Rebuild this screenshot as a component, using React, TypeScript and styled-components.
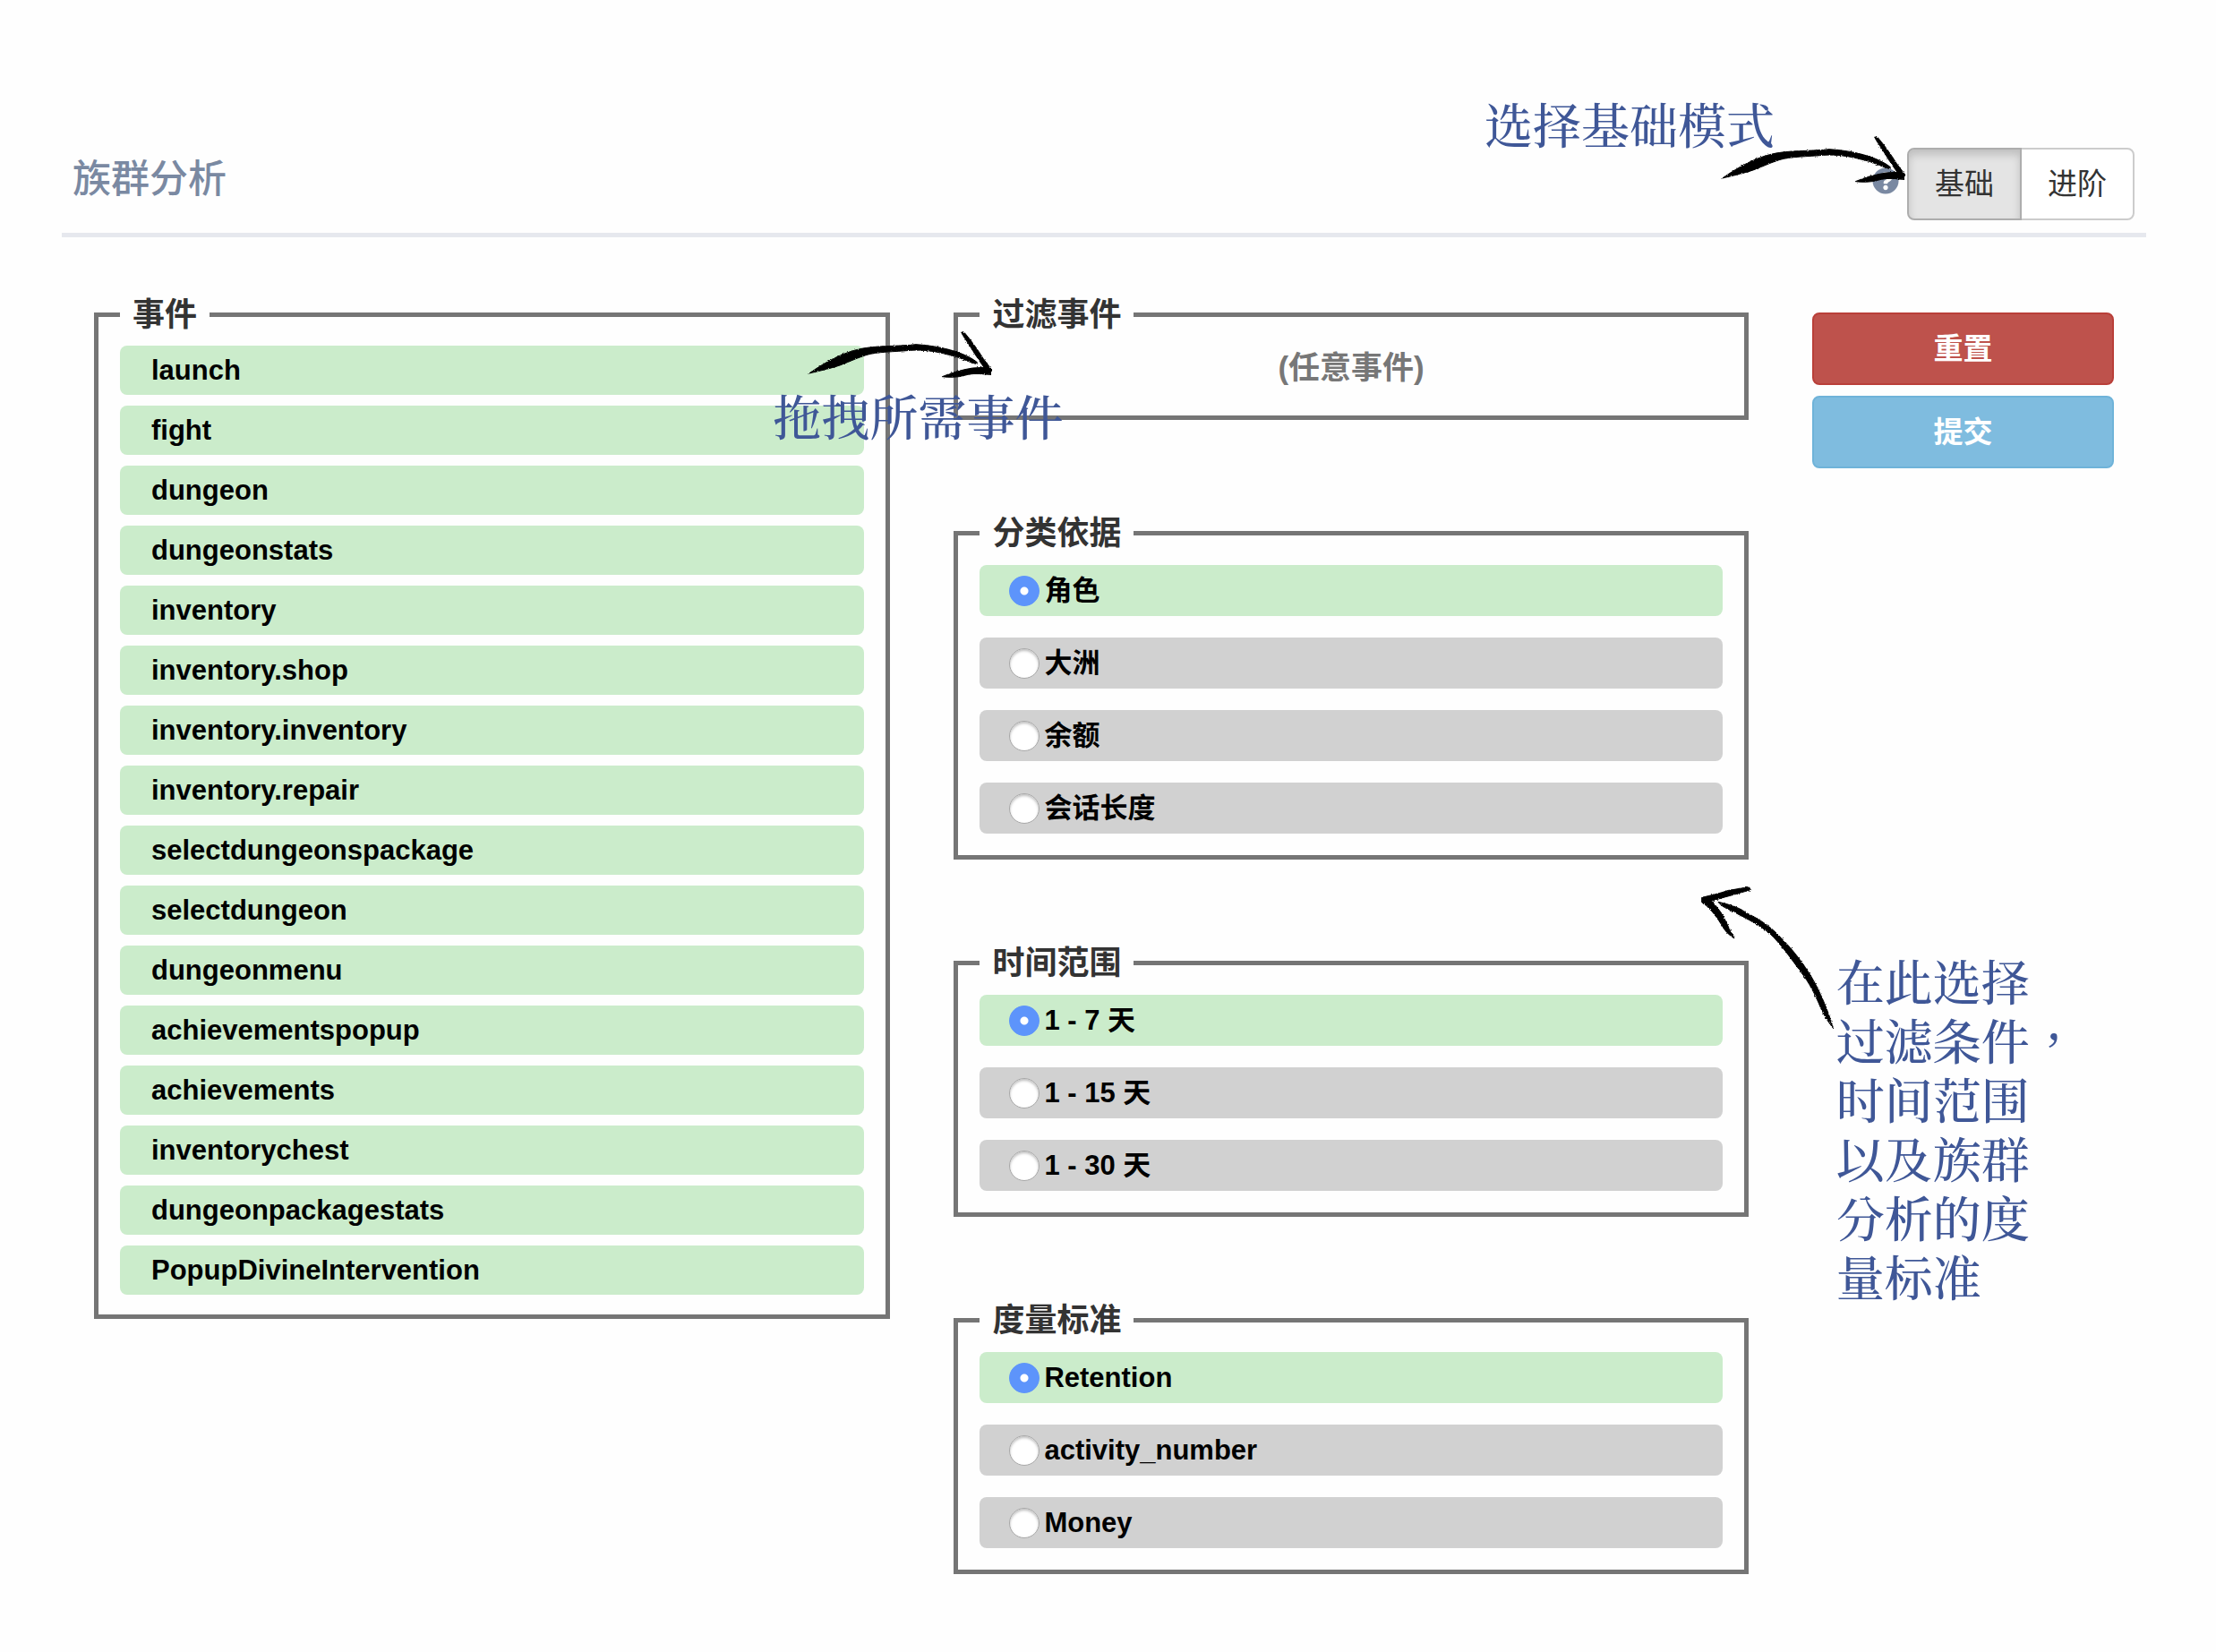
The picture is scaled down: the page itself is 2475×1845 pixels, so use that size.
import React, { useState } from "react";
import styled, { createGlobalStyle } from "styled-components";
import { FaQuestionCircle } from "react-icons/fa";

const GlobalStyle = createGlobalStyle`
  *, *::before, *::after { box-sizing: border-box; }
  body {
    margin: 0;
    background: #fefefe;
    color: #333;
    font-family: "Liberation Sans", "Noto Sans CJK SC", sans-serif;
  }
  button, input { font-family: inherit; }
`;

const Page = styled.div`
  padding: 0 78px 48px 69px;
`;

const Header = styled.header`
  position: relative;
  display: flex;
  align-items: flex-end;
  justify-content: space-between;
  padding: 165px 13px 14px 12px;
  border-bottom: 5px solid #e6e8ee;
`;

const Title = styled.h1`
  margin: 0;
  padding-bottom: 14px;
  font-size: 43px;
  line-height: 64px;
  font-weight: 500;
  color: #7a89a2;
`;

const Tools = styled.div`
  display: flex;
  align-items: center;
  gap: 9px;
`;

const HelpButton = styled.button`
  display: flex;
  margin: 0 0 8px;
  padding: 0;
  border: 0;
  background: none;
  font-size: 30px;
  color: #7a89a2;
`;

const Segmented = styled.div`
  display: flex;
`;

const Segment = styled.button<{ $active: boolean }>`
  position: relative;
  z-index: ${(p) => (p.$active ? 1 : 0)};
  height: 81px;
  padding: 0 29px;
  border: 2px solid ${(p) => (p.$active ? "#adadad" : "#ccc")};
  background: ${(p) => (p.$active ? "#e4e4e4" : "#fff")};
  box-shadow: ${(p) => (p.$active ? "inset 0 6px 10px rgba(0, 0, 0, 0.16)" : "none")};
  font-size: 33px;
  line-height: 48px;
  color: #333;
  &:first-child { border-radius: 8px 0 0 8px; }
  &:last-child { margin-left: -2px; border-radius: 0 8px 8px 0; }
`;

const Board = styled.main`
  display: grid;
  grid-template-columns: minmax(0, 889fr) minmax(0, 887fr) minmax(0, 337fr);
  align-items: start;
  gap: 71px;
  padding: 61px 36px 0;
`;

const Column = styled.div`
  position: relative;
  display: flex;
  flex-direction: column;
  gap: 90px;
`;

const Group = styled.fieldset<{ $spaced?: boolean; $dense?: boolean }>`
  min-width: 0;
  margin: 0 0 ${(p) => (p.$spaced ? 11 : 0)}px;
  padding: ${(p) => (p.$dense ? "9px 24px 22px" : "10px 24px 24px")};
  border: 5px solid #757575;
`;

const Legend = styled.legend`
  padding: 0 14px;
  font-size: 36px;
  line-height: 51px;
  font-weight: 700;
`;

const EventList = styled.ul`
  display: grid;
  gap: 12px;
  margin: 0;
  padding: 0;
  list-style: none;
`;

const EventItem = styled.li`
  height: 55px;
  padding: 0 35px;
  border-radius: 8px;
  background: #cbeccb;
  font-size: 31px;
  line-height: 55px;
  font-weight: 700;
  color: #000;
  cursor: grab;
`;

const DropHint = styled.p`
  margin: 0;
  padding-bottom: 5px;
  font-size: 35px;
  line-height: 48px;
  font-weight: 700;
  text-align: center;
  color: #777;
`;

const Options = styled.div`
  display: grid;
  gap: 24px;
`;

const Option = styled.label<{ $checked: boolean }>`
  display: flex;
  align-items: center;
  gap: 5px;
  height: 57px;
  padding: 0 33px;
  border-radius: 8px;
  background: ${(p) => (p.$checked ? "#cbeccb" : "#d1d1d1")};
  font-size: 31px;
  line-height: 48px;
  font-weight: 700;
  color: #000;
`;

const Radio = styled.input`
  appearance: none;
  flex: none;
  width: 34px;
  height: 34px;
  margin: 0;
  border: 1px solid #a8a8a8;
  border-radius: 50%;
  background: #fff;
  box-shadow: inset 0 2px 3px rgba(0, 0, 0, 0.25);
  &:checked {
    border-color: #5d94fb;
    background: radial-gradient(circle, #fff 4px, #5d94fb 5px);
    box-shadow: none;
  }
`;

const Actions = styled.div`
  position: relative;
  display: grid;
  gap: 12px;
  padding-top: 23px;
`;

const ActionButton = styled.button<{ $tone: "danger" | "info" }>`
  height: 81px;
  padding: 0 24px;
  border: 2px solid ${(p) => (p.$tone === "danger" ? "#b93f39" : "#6fb3d9")};
  border-radius: 8px;
  background: ${(p) => (p.$tone === "danger" ? "#be524c" : "#7fbcdf")};
  font-size: 33px;
  line-height: 48px;
  font-weight: 700;
  color: #fff;
`;

const Note = styled.p`
  position: absolute;
  z-index: 3;
  margin: 0;
  font-family: "Noto Serif CJK TC", "Noto Sans CJK TC", serif;
  font-size: 54px;
  line-height: 66px;
  font-weight: 500;
  white-space: nowrap;
  color: #3f5797;
  pointer-events: none;
`;

const ModeNote = styled(Note)`
  top: 105px;
  right: 415px;
`;

const DragNote = styled(Note)`
  top: 105px;
  left: -202px;
`;

const CriteriaNote = styled(Note)`
  top: 736px;
  left: 27px;
`;

const Arrow = styled.svg`
  position: absolute;
  z-index: 2;
  overflow: visible;
  fill: #000;
  pointer-events: none;
`;

const ModeArrow = styled(Arrow)`
  top: 150px;
  right: 267px;
`;

const DragArrow = styled(Arrow)`
  top: 42px;
  left: -162px;
`;

const CriteriaArrow = styled(Arrow)`
  top: 663px;
  left: -125px;
`;

const events = [
  "launch",
  "fight",
  "dungeon",
  "dungeonstats",
  "inventory",
  "inventory.shop",
  "inventory.inventory",
  "inventory.repair",
  "selectdungeonspackage",
  "selectdungeon",
  "dungeonmenu",
  "achievementspopup",
  "achievements",
  "inventorychest",
  "dungeonpackagestats",
  "PopupDivineIntervention",
];

const groups = [
  { name: "category", title: "分类依据", options: ["角色", "大洲", "余额", "会话长度"] },
  { name: "range", title: "时间范围", options: ["1 - 7 天", "1 - 15 天", "1 - 30 天"] },
  { name: "metric", title: "度量标准", options: ["Retention", "activity_number", "Money"] },
];

const criteria = ["在此选择", "过滤条件，", "时间范围", "以及族群", "分析的度", "量标准"];

/* Roughens the outlines so the strokes read as dry brush marks. */
function BrushFilter({ id }: { id: string }) {
  return (
    <filter id={id} x="-5%" y="-5%" width="110%" height="110%">
      <feTurbulence type="fractalNoise" baseFrequency="0.25" numOctaves={2} seed={4} />
      <feDisplacementMap in="SourceGraphic" scale={8} xChannelSelector="R" yChannelSelector="G" />
    </filter>
  );
}

function SweepArrow({ as: Svg, id }: { as: typeof Arrow; id: string }) {
  return (
    <Svg width="207" height="57" viewBox="40 30 621 171" aria-hidden="true">
      <BrushFilter id={id} />
      <g filter={`url(#${id})`} stroke="#000" strokeWidth="3" strokeLinejoin="round">
        <path d="M42 177C88 145 140 114 200 98C260 82 330 88 400 80C460 84 500 93 540 106C566 116 592 128 606 141L600 145C570 137 550 123 510 115C470 104 430 97 380 100C330 105 270 104 232 116C190 129 158 149 112 160C90 166 64 172 42 177Z" />
        <path d="M552 39L563 41C586 68 606 96 626 128L654 165L650 181C626 181 600 173 562 184C540 191 512 191 488 188C520 174 558 164 590 159L628 157C610 132 596 110 580 84C569 66 557 52 552 39Z" />
      </g>
    </Svg>
  );
}

function BackArrow() {
  return (
    <CriteriaArrow width="152" height="162" viewBox="55 85 456 486" aria-hidden="true">
      <BrushFilter id="brush-back" />
      <g filter="url(#brush-back)" stroke="#000" strokeWidth="3" strokeLinejoin="round">
        <path d="M60 125C90 118 118 112 150 101C178 97 200 92 219 91L225 101C200 104 170 116 140 123L92 137C112 156 128 178 141 206C150 226 162 245 169 262C150 250 136 236 126 216C106 184 84 156 60 141Z" />
        <path d="M115 140C150 148 182 156 212 178C250 196 292 222 325 260C370 304 402 350 427 390C456 440 482 500 501 564C484 542 470 522 459 496C440 450 420 410 393 376C360 330 320 275 288 246C252 216 212 197 180 180C160 167 130 161 115 140Z" />
      </g>
    </CriteriaArrow>
  );
}

export default function App() {
  const [mode, setMode] = useState("基础");
  const [selected, setSelected] = useState<Record<string, string>>({
    category: "角色",
    range: "1 - 7 天",
    metric: "Retention",
  });

  return (
    <>
      <GlobalStyle />
      <Page lang="zh-CN">
        <Header>
          <Title>族群分析</Title>
          <Tools>
            <HelpButton type="button" aria-label="帮助">
              <FaQuestionCircle />
            </HelpButton>
            <Segmented>
              {["基础", "进阶"].map((m) => (
                <Segment key={m} type="button" $active={mode === m} aria-pressed={mode === m} onClick={() => setMode(m)}>
                  {m}
                </Segment>
              ))}
            </Segmented>
          </Tools>
          <ModeNote lang="zh-TW">选择基础模式</ModeNote>
          <SweepArrow as={ModeArrow} id="brush-mode" />
        </Header>

        <Board>
          <Group $dense>
            <Legend>事件</Legend>
            <EventList>
              {events.map((e) => (
                <EventItem key={e} draggable>{e}</EventItem>
              ))}
            </EventList>
          </Group>

          <Column>
            <Group $spaced>
              <Legend>过滤事件</Legend>
              <DropHint>(任意事件)</DropHint>
            </Group>
            {groups.map((g) => (
              <Group key={g.name}>
                <Legend>{g.title}</Legend>
                <Options>
                  {g.options.map((o) => (
                    <Option key={o} $checked={selected[g.name] === o}>
                      <Radio
                        type="radio"
                        name={g.name}
                        value={o}
                        checked={selected[g.name] === o}
                        onChange={() => setSelected({ ...selected, [g.name]: o })}
                      />
                      {o}
                    </Option>
                  ))}
                </Options>
              </Group>
            ))}
            <SweepArrow as={DragArrow} id="brush-drag" />
            <DragNote lang="zh-TW">拖拽所需事件</DragNote>
          </Column>

          <Actions>
            <ActionButton type="button" $tone="danger">重置</ActionButton>
            <ActionButton type="button" $tone="info">提交</ActionButton>
            <BackArrow />
            <CriteriaNote lang="zh-TW">
              {criteria.map((line) => (
                <React.Fragment key={line}>
                  {line}
                  <br />
                </React.Fragment>
              ))}
            </CriteriaNote>
          </Actions>
        </Board>
      </Page>
    </>
  );
}
